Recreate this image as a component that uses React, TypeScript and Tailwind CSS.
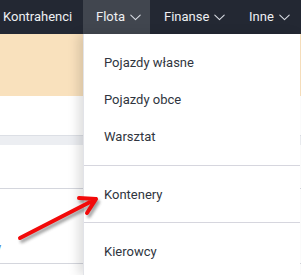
import React from "react";

function Chevron() {
  return (
    <svg width="11" height="7" viewBox="0 0 11 7" className="ml-[5px] mt-[1px]" fill="none">
      <path d="M0.8 1.2 L5.5 5.6 L10.2 1.2" stroke="#d7dbe2" strokeWidth="1.1" strokeLinecap="round" strokeLinejoin="round" />
    </svg>
  );
}

export default function App() {
  return (
    <div className="relative w-[301px] h-[275px] overflow-hidden bg-white" style={{ fontFamily: "Roboto, 'Liberation Sans', sans-serif" }}>
      {/* navbar */}
      <div className="flex h-[34px] bg-[#232833] text-[13px] text-[#eef0f3]">
        <div className="flex items-center pl-[3px] w-[83px]">Kontrahenci</div>
        <div className="flex items-center pl-[13px] w-[67px] bg-[#41464f]">
          Flota
          <Chevron />
        </div>
        <div className="flex items-center pl-[14px] w-[85px]">
          Finanse
          <Chevron />
        </div>
        <div className="flex items-center pl-[14px]">
          Inne
          <Chevron />
        </div>
      </div>
      {/* banner */}
      <div className="h-[62px] bg-[#f9e1bd]" />
      {/* page content */}
      <div className="h-[39px]" />
      <div className="h-[10px] bg-[#eceef2] border-t border-[#dcdfe5]" />
      <div className="h-[43px]" />
      <div className="h-[75px] border-t border-[#d4d6dd] flex items-center">
        <span className="-ml-[5px] mt-[44px] text-[13px] text-[#4a7fd0]">y</span>
      </div>
      <div className="border-t border-[#d4d6dd] h-[12px]" />

      {/* dropdown menu */}
      <div className="absolute left-[83px] top-[34px] w-[217px] bottom-0 bg-white border-l border-[#e2e3e8] shadow-[-5px_0_10px_rgba(0,0,0,0.13)] text-[13px] text-[#2f3540]">
        <div className="pt-[10px] pb-[10px]">
          <div className="h-[37px] flex items-center pl-[20px]">Pojazdy własne</div>
          <div className="h-[37px] flex items-center pl-[20px]">Pojazdy obce</div>
          <div className="h-[37px] flex items-center pl-[20px]">Warsztat</div>
        </div>
        <div className="h-px bg-[#d6d6de]" />
        <div className="pt-[10px] pb-[9px]">
          <div className="h-[37px] flex items-center pl-[20px]">Kontenery</div>
        </div>
        <div className="h-px bg-[#d6d6de]" />
        <div className="pt-[10px]">
          <div className="h-[37px] flex items-center pl-[20px]">Kierowcy</div>
        </div>
      </div>

      {/* red arrow annotation */}
      <svg className="absolute left-0 top-0" width="301" height="275" viewBox="0 0 301 275">
        <defs>
          <filter id="sh" x="-20%" y="-20%" width="140%" height="140%">
            <feGaussianBlur stdDeviation="1.5" />
          </filter>
        </defs>
        <g transform="translate(2,3)" opacity="0.45" filter="url(#sh)">
          <path d="M20 238 L96 199 M79 198 L96 199 L87 213" stroke="#333" strokeWidth="4" fill="none" strokeLinecap="round" strokeLinejoin="round" />
        </g>
        <path d="M20 238 L96 199 M79 198 L96 199 L87 213" stroke="#f20a0a" strokeWidth="4" fill="none" strokeLinecap="round" strokeLinejoin="round" />
      </svg>
    </div>
  );
}
